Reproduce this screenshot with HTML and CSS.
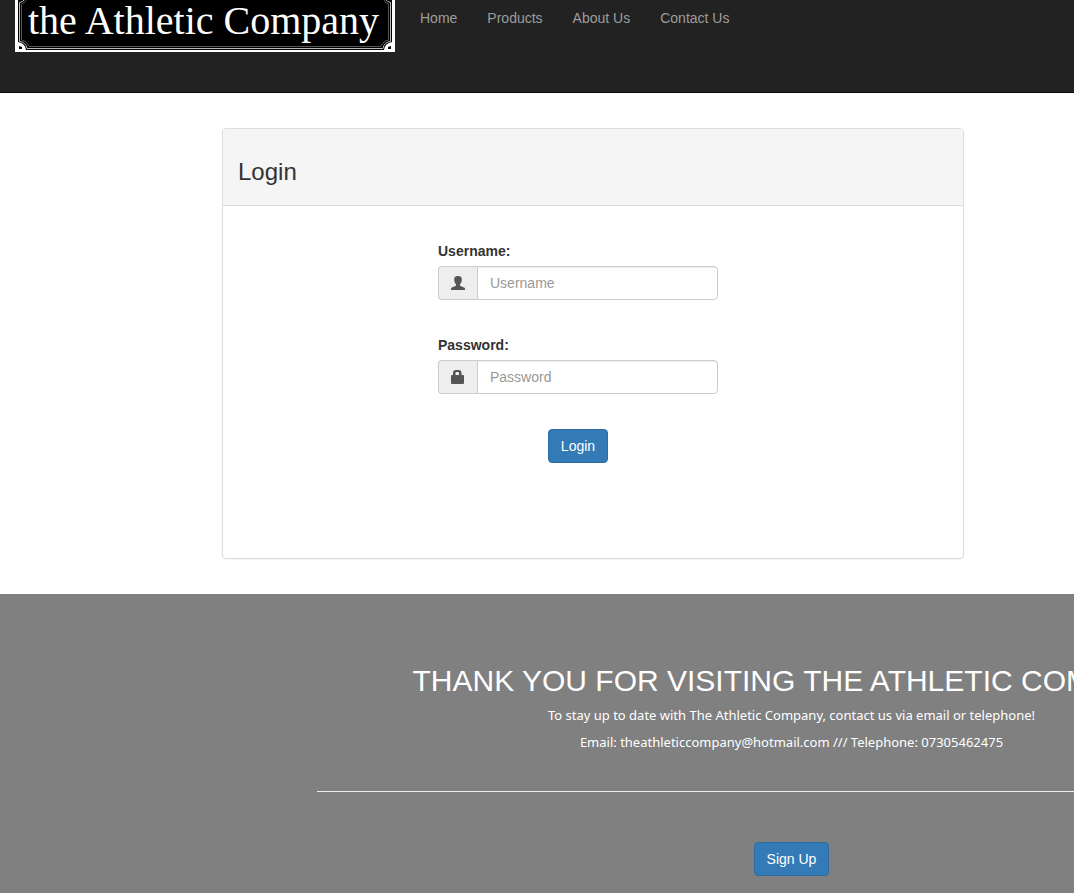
FILE: index.html
```html
<!DOCTYPE html>
<html lang="en">
<head>
<meta charset="utf-8">
<meta name="viewport" content="width=device-width, initial-scale=1">
<title>Login - the Athletic Company</title>
<link rel="stylesheet" href="styles.css">
</head>
<body>
<nav class="navbar">
  <a class="brand" href="#" aria-label="the Athletic Company">
    <svg class="logo" width="380" height="52" viewBox="0 0 380 52">
      <rect width="380" height="52" fill="#fff"/>
      <rect x="3" width="374" height="50" fill="#000"/>
      <g fill="none" stroke="#888">
        <path stroke="#bbb" d="M9 0Q8 2 4.500 2.500V41.500Q11 42 12 48.500H368Q369 42 375.500 41.500V2.500Q372 2 371 0"/>
        <path stroke="#555" d="M11 0Q10 3 6.500 4V40Q12 41 14 46.500H366Q368 41 373.500 40V4Q370 3 369 0"/>
      </g>
      <path d="M3 42Q10 43 11 50H3ZM377 42Q370 43 369 50H377Z" fill="#fff"/>
      <path d="M4 46l3 1v2H4zM376 46l-3 1v2h3z" fill="#000"/>
      <text class="logo-text" x="13" y="34">the Athletic Company</text>
    </svg>
  </a>
  <ul class="nav">
    <li><a href="#">Home</a></li>
    <li><a href="#">Products</a></li>
    <li><a href="#">About Us</a></li>
    <li><a href="#">Contact Us</a></li>
  </ul>
</nav>

<main class="panel">
  <header class="panel-heading"><h1 class="panel-title">Login</h1></header>
  <form class="login-form">
    <div class="field">
      <label class="label" for="username">Username:</label>
      <div class="input-group">
        <span class="addon">
          <svg width="16" height="14" viewBox="0 0 16 14" fill="#555" aria-hidden="true"><path d="M8 0C5 0 4 1.600 4.200 4C4.300 6 5 7.500 6 8.200V9.400C6 10.200 1 11 1 12.500V14H15V12.500C15 11 10 10.200 10 9.400V8.200C11 7.500 11.700 6 11.800 4C12 1.600 11 0 8 0Z"/></svg>
        </span>
        <input class="control" id="username" type="text" placeholder="Username">
      </div>
    </div>
    <div class="field">
      <label class="label" for="password">Password:</label>
      <div class="input-group">
        <span class="addon">
          <svg width="16" height="14" viewBox="0 0 16 14" fill="#555" aria-hidden="true"><path fill-rule="evenodd" d="M3 5V3Q3 0 6 0H8.500Q11.500 0 11.500 3V5H13Q14 5 14 6V13Q14 14 13 14H2Q1 14 1 13V6Q1 5 2 5ZM5.500 5H9V3Q9 2 8 2H6.500Q5.500 2 5.500 3Z"/></svg>
        </span>
        <input class="control" id="password" type="password" placeholder="Password">
      </div>
    </div>
    <button class="btn" type="submit">Login</button>
  </form>
</main>

<footer class="footer">
  <div class="footer-content">
    <h2 class="footer-title">THANK YOU FOR VISITING THE ATHLETIC COMPANY</h2>
    <p class="footer-text">To stay up to date with The Athletic Company, contact us via email or telephone!</p>
    <p class="footer-text">Email: theathleticcompany@hotmail.com /// Telephone: 07305462475</p>
    <hr class="divider">
    <button class="btn" type="button">Sign Up</button>
  </div>
</footer>
</body>
</html>
```
FILE: styles.css
```css
* { box-sizing: border-box; }
body {
  margin: 0;
  min-height: 100vh;
  display: flex;
  flex-direction: column;
  overflow-x: hidden;
  background: #fff;
  color: #333;
  font: 14px/20px "Liberation Sans", Arial, sans-serif;
}
.navbar {
  display: flex;
  align-items: flex-start;
  gap: 10px;
  padding: 0 15px 40px;
  background: #222;
  border-bottom: 1px solid #080808;
}
.brand, .logo { display: block; }
.logo-text {
  font-family: "Liberation Serif", "Times New Roman", serif;
  font-size: 40px;
  fill: #fff;
}
.nav {
  display: flex;
  gap: 30px;
  margin: 0;
  padding: 8px 15px;
  list-style: none;
}
.nav a { color: #9d9d9d; text-decoration: none; }
.panel {
  margin: 35px 110px 35px 222px;
  border: 1px solid #ddd;
  border-radius: 4px;
  box-shadow: 0 1px 1px rgba(0, 0, 0, .05);
}
.panel-heading {
  padding: 30px 15px 20px;
  background: #f5f5f5;
  border-bottom: 1px solid #ddd;
  border-radius: 3px 3px 0 0;
}
.panel-title { margin: 0; font-size: 24px; line-height: 26px; font-weight: 400; }
.login-form {
  display: flex;
  flex-direction: column;
  align-items: center;
  gap: 35px;
  padding: 35px 30px 95px 0;
}
.field { width: 280px; }
.label { display: block; margin-bottom: 5px; font-weight: 700; }
.input-group { display: flex; }
.addon {
  display: flex;
  align-items: center;
  padding: 0 11px;
  background: #eee;
  border: 1px solid #ccc;
  border-right: 0;
  border-radius: 4px 0 0 4px;
}
.control {
  flex: 1;
  min-width: 0;
  height: 34px;
  padding: 6px 12px;
  border: 1px solid #ccc;
  border-radius: 0 4px 4px 0;
  box-shadow: inset 0 1px 1px rgba(0, 0, 0, .075);
  font: inherit;
  color: #555;
}
.control::placeholder { color: #999; }
.btn {
  padding: 6px 12px;
  background: #337ab7;
  border: 1px solid #2e6da4;
  border-radius: 4px;
  color: #fff;
  font: inherit;
}
.footer {
  flex: 1;
  overflow: hidden;
  padding: 69px 0 17px 317px;
  background: #808080;
  color: #fff;
}
.footer-content { width: 949px; text-align: center; }
.footer-title {
  margin: 0 0 6px;
  font-size: 30px;
  line-height: 36px;
  font-weight: 400;
  white-space: nowrap;
}
.footer-text {
  margin: 0 0 7px;
  font-family: "Noto Sans", sans-serif;
  font-size: 13px;
  line-height: 20px;
}
.divider { margin: 39px 0 50px; border: 0; border-top: 1px solid #eee; }
```
